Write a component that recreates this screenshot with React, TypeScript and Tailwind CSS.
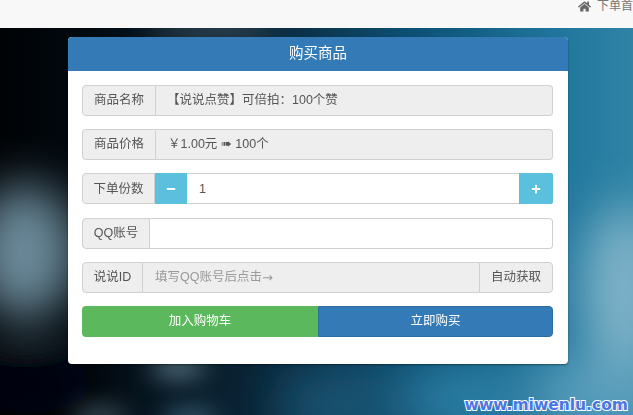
import React from "react";
import { FaHome, FaMinus, FaPlus } from "react-icons/fa";

const font = { fontFamily: '"Liberation Sans", "Noto Sans CJK SC", sans-serif' };

function Label({ children, w }: { children: React.ReactNode; w: string }) {
  return (
    <div className={`${w} flex shrink-0 items-center justify-center rounded-l-[4px] border border-[#d0d0d0] bg-[#eeeeee] text-[12.5px] text-[#555555]`}>
      {children}
    </div>
  );
}

function Row({ children }: { children: React.ReactNode }) {
  return <div className="flex h-[31px] w-full">{children}</div>;
}

export default function App() {
  return (
    <div style={font} className="relative h-[415px] w-[633px] overflow-hidden bg-[#1b6f97]">
      <div className="absolute inset-0 overflow-hidden">
        <svg width="633" height="415" viewBox="0 0 633 415" aria-hidden="true">
          <defs>
            <filter id="b1" x="-60%" y="-60%" width="220%" height="220%"><feGaussianBlur stdDeviation="24" /></filter>
            <filter id="b2" x="-60%" y="-60%" width="220%" height="220%"><feGaussianBlur stdDeviation="12" /></filter>
            <linearGradient id="g" x1="0" x2="1" y1="0" y2="0">
              <stop offset="0" stopColor="#000306" />
              <stop offset="0.12" stopColor="#01080e" />
              <stop offset="0.4" stopColor="#0a2436" />
              <stop offset="0.65" stopColor="#0c5074" />
              <stop offset="0.88" stopColor="#1f769c" />
              <stop offset="1" stopColor="#2f84a6" />
            </linearGradient>
          </defs>
          <rect width="633" height="415" fill="url(#g)" />
          <g filter="url(#b1)">
            <ellipse cx="25" cy="252" rx="52" ry="68" fill="#6b8999" />
            <ellipse cx="25" cy="385" rx="75" ry="28" fill="#01060a" />
            <ellipse cx="625" cy="290" rx="42" ry="85" fill="#7fb2c8" />
            <ellipse cx="600" cy="395" rx="85" ry="35" fill="#5a9fbc" />
            <ellipse cx="470" cy="400" rx="80" ry="30" fill="#2f80a6" />
            <ellipse cx="345" cy="405" rx="70" ry="28" fill="#1d5674" />
          </g>
          <g filter="url(#b2)">
            <ellipse cx="178" cy="368" rx="28" ry="8" fill="#6f8c9c" />
            <ellipse cx="100" cy="416" rx="28" ry="7" fill="#566f7d" />
            <ellipse cx="190" cy="418" rx="28" ry="7" fill="#4f7a90" />
            <ellipse cx="210" cy="30" rx="65" ry="4" fill="#74838c" />
          </g>
        </svg>
      </div>

      <div className="relative blur-[0.35px]">
        <div className="flex h-[28px] items-start justify-end overflow-hidden bg-[#f8f8f8]">
          <div className="flex w-[55px] shrink-0 items-center gap-[6px] whitespace-nowrap text-[12px] leading-[11px] text-[#777777]">
            <FaHome className="size-[13px] shrink-0 text-[#666666]" />
            <span>下单首页</span>
          </div>
        </div>

        <div className="ml-[68px] mt-[9px] w-[500px] rounded-[4px] bg-white shadow-[0_1px_2px_rgba(0,0,0,0.4)]">
          <div className="flex h-[34px] items-center justify-center rounded-t-[4px] bg-[#337ab7] text-[14.5px] text-white">
            购买商品
          </div>
          <div className="flex h-[293px] flex-col gap-[13.2px] pl-[14px] pr-[15px] pt-[14px]">
            <Row>
              <Label w="w-[74px]">商品名称</Label>
              <div className="flex flex-1 items-center rounded-r-[4px] border border-l-0 border-[#d0d0d0] bg-[#eeeeee] pl-[11px] text-[12.5px] text-[#555555]">
                【说说点赞】可倍拍：100个赞
              </div>
            </Row>
            <Row>
              <Label w="w-[74px]">商品价格</Label>
              <div className="flex flex-1 items-center rounded-r-[4px] border border-l-0 border-[#d0d0d0] bg-[#eeeeee] pl-[12px] text-[12.5px] text-[#555555]">
                ￥1.00元 ➠ 100个
              </div>
            </Row>
            <Row>
              <Label w="w-[73px]">下单份数</Label>
              <div className="flex w-[32px] shrink-0 items-center justify-center bg-[#5bc0de] text-white">
                <FaMinus className="size-[10px]" />
              </div>
              <div className="flex flex-1 items-center border-y border-[#d0d0d0] bg-white pl-[12px] text-[12.5px] text-[#555555]">1</div>
              <div className="flex w-[34px] shrink-0 items-center justify-center rounded-r-[2px] bg-[#5bc0de] text-white">
                <FaPlus className="size-[10px]" />
              </div>
            </Row>
            <Row>
              <Label w="w-[68px]">QQ账号</Label>
              <div className="flex-1 rounded-r-[4px] border border-l-0 border-[#d0d0d0] bg-white" />
            </Row>
            <Row>
              <Label w="w-[61px]">说说ID</Label>
              <div className="flex flex-1 items-center border-y border-[#d0d0d0] bg-[#eeeeee] pl-[12px] text-[12.5px] text-[#999999]">
                填写QQ账号后点击<span className="text-[13px]" style={{ fontFamily: '"DejaVu Sans", sans-serif' }}>→</span>
              </div>
              <div className="flex w-[74px] shrink-0 items-center justify-center rounded-r-[4px] border border-[#d0d0d0] bg-[#eeeeee] text-[12.5px] text-[#555555]">
                自动获取
              </div>
            </Row>
            <Row>
              <div className="flex flex-1 items-center justify-center rounded-l-[4px] bg-[#5cb85c] text-[12.5px] text-white">加入购物车</div>
              <div className="flex w-[235px] shrink-0 items-center justify-center rounded-r-[4px] border border-[#2e6da4] bg-[#337ab7] text-[12.5px] text-white">立即购买</div>
            </Row>
          </div>
        </div>
      </div>

      <div
        className="absolute bottom-[2px] right-[5px] text-[15.5px] font-bold leading-[16px] text-[#4a76e2] [-webkit-text-stroke:2px_white] [paint-order:stroke_fill]"
        style={{ fontFamily: '"DejaVu Sans", sans-serif' }}
      >
        www.miwenlu.com
      </div>
    </div>
  );
}
